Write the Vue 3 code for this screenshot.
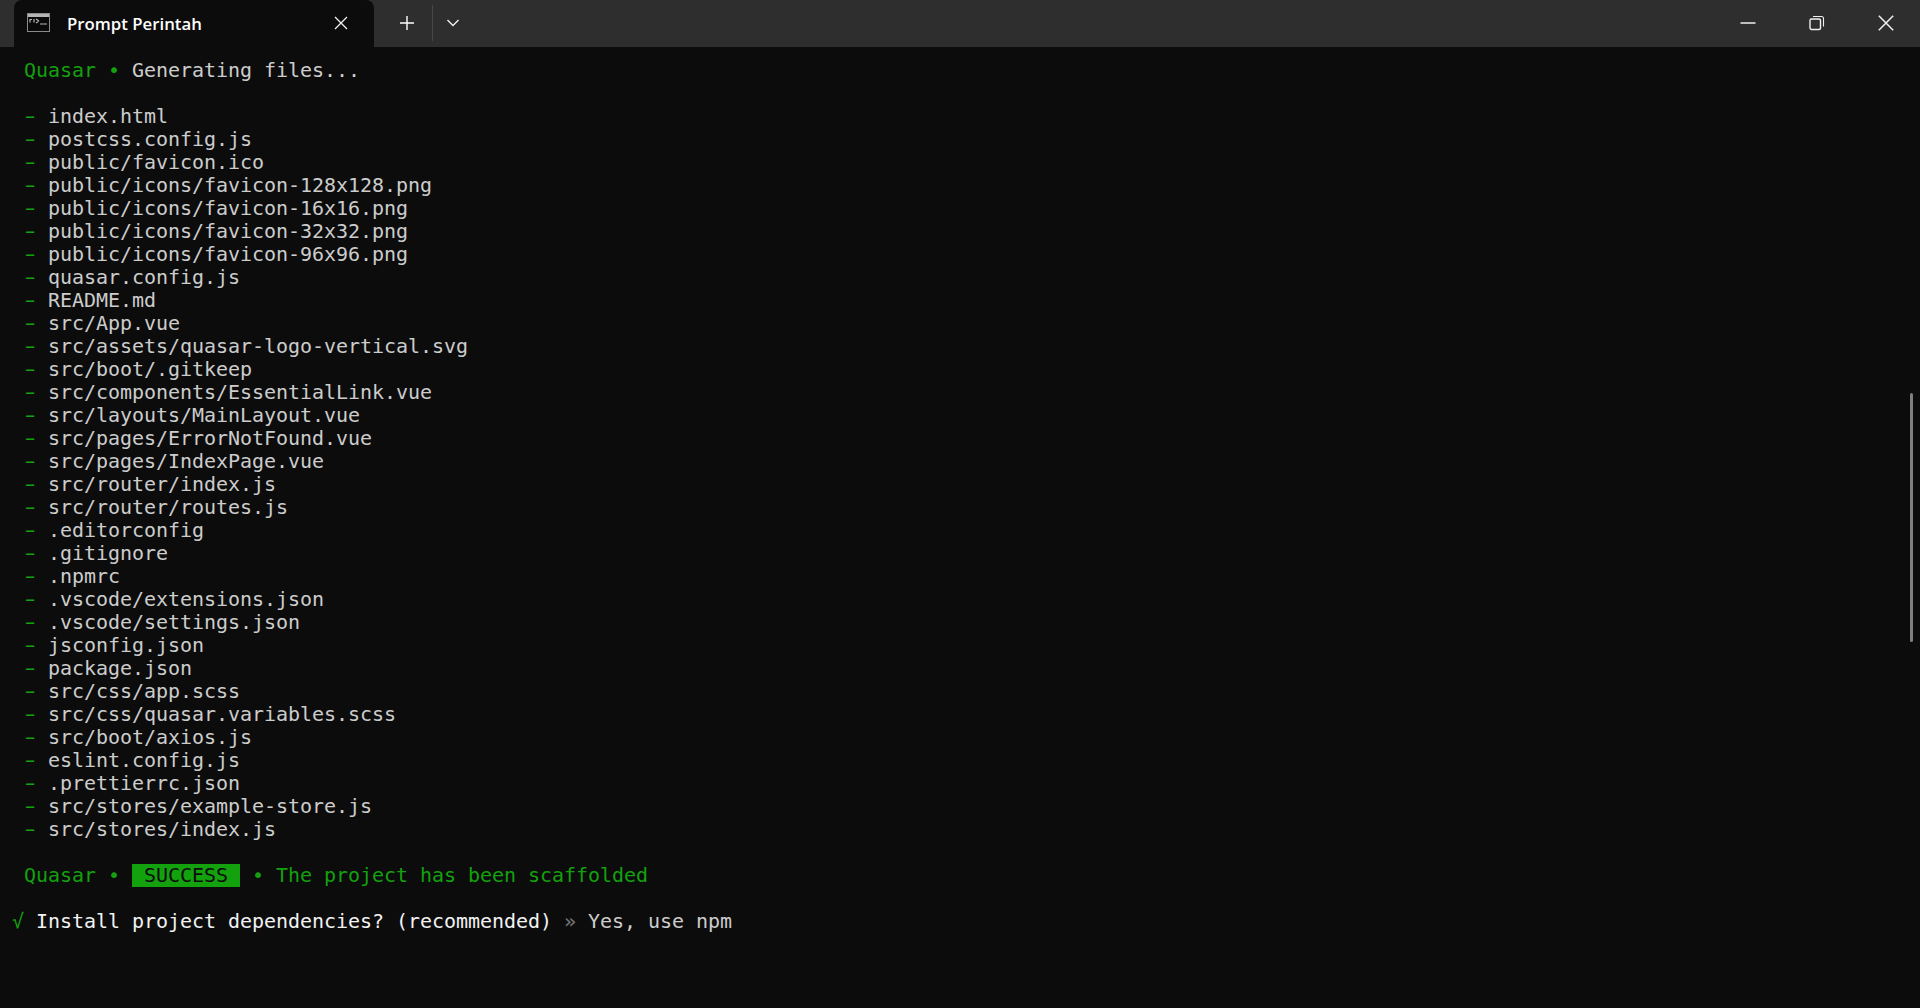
<script setup>
const files = [
  'index.html','postcss.config.js','public/favicon.ico','public/icons/favicon-128x128.png','public/icons/favicon-16x16.png','public/icons/favicon-32x32.png','public/icons/favicon-96x96.png','quasar.config.js','README.md','src/App.vue','src/assets/quasar-logo-vertical.svg','src/boot/.gitkeep','src/components/EssentialLink.vue','src/layouts/MainLayout.vue','src/pages/ErrorNotFound.vue','src/pages/IndexPage.vue','src/router/index.js','src/router/routes.js','.editorconfig','.gitignore','.npmrc','.vscode/extensions.json','.vscode/settings.json','jsconfig.json','package.json','src/css/app.scss','src/css/quasar.variables.scss','src/boot/axios.js','eslint.config.js','.prettierrc.json','src/stores/example-store.js','src/stores/index.js'
]
</script>

<template>
  <div class="window">
    <header class="titlebar">
      <div class="tab">
        <svg class="tab-icon" width="24" height="20" viewBox="0 0 24 20">
          <rect x="0.5" y="0.5" width="22" height="18" fill="#0a0a0a" stroke="#8a8a8a" />
          <rect x="1" y="1" width="21" height="3" fill="#b5b5b5" />
          <path d="M3 9.5 V6.5 H5 M7 6 V9.5 M9 6 L12 8 M9 10 L12 8 M13 11 H20" fill="none" stroke="#b5b5b5" stroke-width="1.2" />
        </svg>
        <span class="tab-title">Prompt Perintah</span>
        <svg class="tab-close" width="14" height="14" viewBox="0 0 14 14">
          <path d="M1 1 L13 13 M13 1 L1 13" stroke="#f0f0f0" stroke-width="1.3" fill="none" />
        </svg>
      </div>
      <div class="tab-actions">
        <svg width="16" height="16" viewBox="0 0 16 16">
          <path d="M8 1 V15 M1 8 H15" stroke="#ffffff" stroke-width="1.4" fill="none" />
        </svg>
        <span class="divider"></span>
        <svg width="14" height="10" viewBox="0 0 14 10">
          <path d="M1.5 2 L7 7.5 L12.5 2" stroke="#f0f0f0" stroke-width="1.4" fill="none" />
        </svg>
      </div>
      <div class="window-controls">
        <div class="control">
          <svg width="16" height="16" viewBox="0 0 16 16"><path d="M0.5 8 H15.5" stroke="#f0f0f0" stroke-width="1.5" fill="none" /></svg>
        </div>
        <div class="control">
          <svg width="16" height="16" viewBox="0 0 16 16">
            <rect x="1" y="4" width="10.5" height="10.5" rx="1.5" stroke="#f0f0f0" stroke-width="1.4" fill="none" />
            <path d="M4 1.5 H12.5 Q14.5 1.5 14.5 3.5 V11.5" stroke="#f0f0f0" stroke-width="1.1" fill="none" />
          </svg>
        </div>
        <div class="control">
          <svg width="16" height="16" viewBox="0 0 16 16"><path d="M0.8 0.8 L15.2 15.2 M15.2 0.8 L0.8 15.2" stroke="#f0f0f0" stroke-width="1.5" fill="none" /></svg>
        </div>
      </div>
    </header>

    <main class="terminal">
      <div class="line indent"><span class="green">Quasar •</span> Generating files...</div>
      <div class="line"></div>
      <div v-for="f in files" :key="f" class="line indent"><span class="green dash">-</span><span class="path">{{ f }}</span></div>
      <div class="line"></div>
      <div class="line indent green">Quasar • <span class="badge"> SUCCESS </span> • The project has been scaffolded</div>
      <div class="line"></div>
      <div class="line"><span class="green">√</span> <span class="white">Install project dependencies? (recommended)</span> <span class="dim">»</span> Yes, use npm</div>
      <div class="scrollbar"></div>
    </main>
  </div>
</template>

<style scoped>
.window {
  width: 1920px;
  height: 1008px;
  display: flex;
  flex-direction: column;
  background: #0c0c0c;
  overflow: hidden;
}
.titlebar {
  height: 47px;
  flex: none;
  display: flex;
  align-items: stretch;
  padding-left: 14px;
  background: #2e2e2e;
  font-family: "Open Sans", "Noto Sans", sans-serif;
}
.tab {
  width: 360px;
  display: flex;
  align-items: center;
  padding: 0 26px 0 13px;
  box-sizing: border-box;
  background: #0c0c0c;
  border-radius: 8px 8px 0 0;
  color: #fff;
}
.tab-icon {
  margin-right: 16px;
  margin-top: -2px;
}
.tab-title {
  flex: 1;
  font-size: 16.8px;
  font-weight: 600;
  margin-top: -1px;
}
.tab-close {
  margin-top: -2px;
}
.tab-actions {
  display: flex;
  align-items: center;
  padding-left: 25px;
}
.tab-actions svg {
  margin-top: -2px;
}
.divider {
  width: 1px;
  height: 36px;
  margin: -1px 13px 0 17px;
  background: #474747;
}
.window-controls {
  margin-left: auto;
  display: flex;
}
.control {
  width: 69px;
  display: flex;
  align-items: center;
  justify-content: center;
  padding-bottom: 2px;
  box-sizing: border-box;
}
.terminal {
  position: relative;
  flex: 1;
  padding: 12px 0 0 12px;
  font-family: "DejaVu Sans Mono", "Liberation Mono", monospace;
  font-size: 20px;
  letter-spacing: -0.04px;
  line-height: 23px;
  color: #cccccc;
  white-space: pre;
}
.line {
  height: 23px;
}
.indent {
  padding-left: 12px;
}
.dash {
  display: inline-block;
  transform: scaleX(1.6);
}
.path {
  margin-left: 12px;
}
.green {
  color: #13a10e;
}
.white {
  color: #f2f2f2;
}
.dim {
  color: #767676;
}
.badge {
  display: inline-block;
  height: 23px;
  background: #13a10e;
  color: #0c0c0c;
}
.scrollbar {
  position: absolute;
  top: 346px;
  right: 7px;
  width: 3px;
  height: 249px;
  border-radius: 2px;
  background: #7f7f7f;
}
</style>

<style>
html, body {
  margin: 0;
  background: #0c0c0c;
}
</style>
